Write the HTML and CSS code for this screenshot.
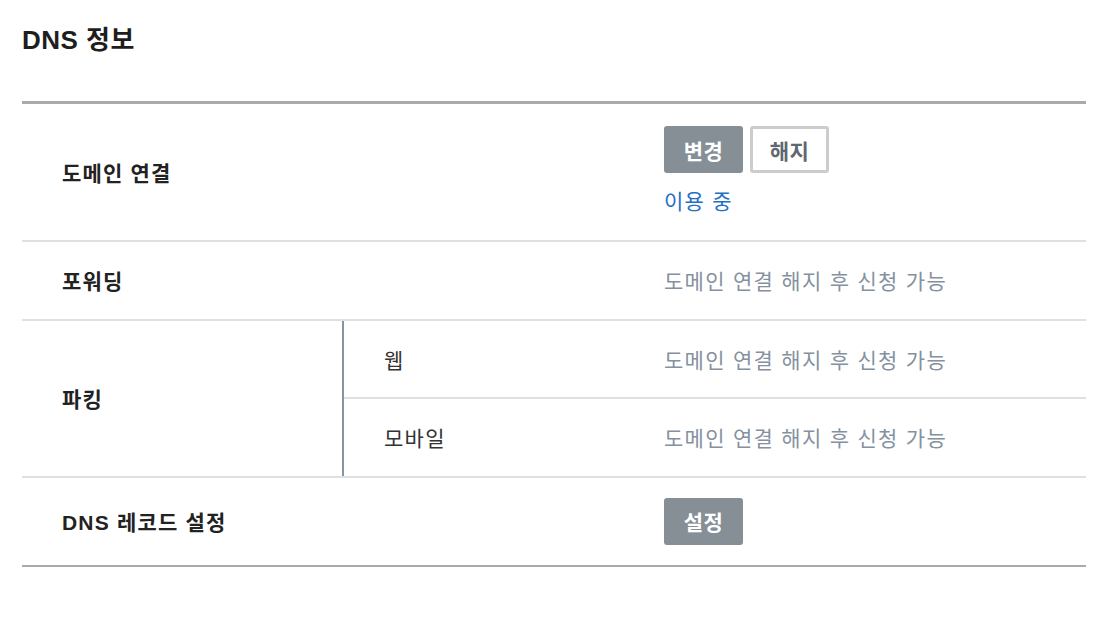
FILE: index.html
```html
<!DOCTYPE html>
<html lang="ko">

<head>
    <meta charset="UTF-8" />
    <meta name="viewport" content="width=device-width, initial-scale=1" />
    <title>DNS 정보</title>
    <link rel="stylesheet" href="styles.css">
</head>

<body>
    <h2 class="section-title">DNS 정보</h2>

    <table class="dns-table">
        <tr class="row-domain">
            <th colspan="2">도메인 연결</th>
            <td>
                <div class="btn-group">
                    <button class="btn btn-dark">변경</button>
                    <button class="btn btn-outline">해지</button>
                </div>
                <p class="status">이용 중</p>
            </td>
        </tr>
        <tr>
            <th colspan="2">포워딩</th>
            <td class="muted">도메인 연결 해지 후 신청 가능</td>
        </tr>
        <tr class="row-sub">
            <th rowspan="2" class="group-head">파킹</th>
            <td class="sub-head">웹</td>
            <td class="muted">도메인 연결 해지 후 신청 가능</td>
        </tr>
        <tr class="row-sub row-sub-last">
            <td class="sub-head">모바일</td>
            <td class="muted">도메인 연결 해지 후 신청 가능</td>
        </tr>
        <tr class="row-record">
            <th colspan="2">DNS 레코드 설정</th>
            <td>
                <button class="btn btn-dark">설정</button>
            </td>
        </tr>
    </table>
</body>

</html>
```

FILE: styles.css
```css
body {
    margin: 0;
    padding: 0 28px 0 22px;
    font-family: "Liberation Sans", "Noto Sans CJK KR", sans-serif;
    color: #222;
    background-color: #fff;
}

.section-title {
    margin: 0;
    padding-top: 24px;
    height: 101px;
    box-sizing: border-box;
    font-size: 26px;
    font-weight: bold;
    line-height: 32px;
    letter-spacing: 0.5px;
    color: #1e1e1e;
}

.dns-table {
    width: 100%;
    border-collapse: collapse;
    border-top: 3px solid #aaa;
    border-bottom: 2px solid #aaa;
}

.dns-table th,
.dns-table td {
    padding: 0;
    text-align: left;
    vertical-align: middle;
    border-bottom: 2px solid #e0e0e0;
    font-size: 21px;
    letter-spacing: 1.3px;
    height: 77px;
}

.dns-table th {
    width: 280px;
    padding-left: 40px;
    font-weight: bold;
    letter-spacing: 1.2px;
    color: #222;
}

.dns-table .group-head {
    border-right: 2px solid #8593a3;
}

.dns-table .sub-head {
    width: 280px;
    padding-left: 40px;
    color: #333;
}

.dns-table .row-sub td {
    height: 76px;
}

.dns-table .row-sub-last td {
    height: 77px;
}

.muted {
    color: #8591a0;
}

.dns-table .row-domain td {
    height: 138px;
    padding: 21px 0 22px;
    box-sizing: border-box;
}

.dns-table .row-record td {
    height: 87px;
}

.dns-table tr:last-child th,
.dns-table tr:last-child td {
    border-bottom: none;
}

.btn-group {
    display: flex;
    gap: 7px;
}

.btn {
    width: 79px;
    height: 47px;
    padding: 0;
    font-family: inherit;
    font-size: 21px;
    font-weight: bold;
    letter-spacing: 0.5px;
    border-radius: 3px;
    cursor: pointer;
}

.btn-dark {
    background-color: #868e96;
    color: #fff;
    border: none;
}

.btn-outline {
    background-color: #fff;
    color: #5f6770;
    border: 3px solid #ccc;
}

.status {
    margin: 15px 0 0;
    color: #1f6fc5;
    font-size: 21px;
    line-height: 28px;
}
```
